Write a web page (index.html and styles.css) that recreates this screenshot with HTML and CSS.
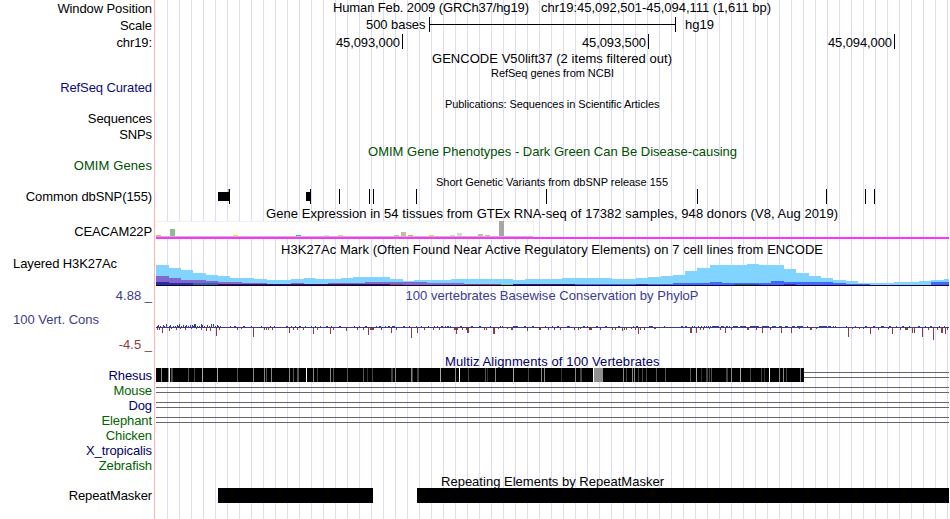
FILE: index.html
```html
<!DOCTYPE html>
<html lang="en">
<head>
    <meta charset="UTF-8"/>
    <title>chr19:45,092,501-45,094,111</title>
    <link rel="stylesheet" href="styles.css">
</head>
<body>

<div class="browser">
    <div class="row position">
        <div class="labels"><span>Window Position</span></div>
        <svg viewBox="156 0 793 17">
            <text x="333" y="12" textLength="196">Human Feb. 2009 (GRCh37/hg19)</text>
            <text x="541" y="12" textLength="230">chr19:45,092,501-45,094,111 (1,611 bp)</text>
        </svg>
    </div>

    <div class="row position">
        <div class="labels"><span>Scale</span></div>
        <svg viewBox="156 17 793 17">
            <text x="366" y="29" textLength="59.5">500 bases</text>
            <path d="M429 17h1v7h245v-7h1v15h-1v-7h-245v7h-1z"/>
            <text x="685" y="29" textLength="29">hg19</text>
        </svg>
    </div>

    <div class="row ruler">
        <div class="labels"><span>chr19:</span></div>
        <svg viewBox="156 34 793 16">
            <text x="336" y="47" textLength="64">45,093,000</text>
            <text x="582" y="47" textLength="64">45,093,500</text>
            <text x="828" y="47" textLength="64">45,094,000</text>
            <path d="M402 34h1v15h-1zM648 34h1v15h-1zM894 34h1v15h-1z"/>
        </svg>
    </div>

    <div class="row gencode">
        <div class="labels"></div>
        <svg viewBox="156 50 793 16">
            <text x="432" y="63" textLength="240">GENCODE V50lift37 (2 items filtered out)</text>
        </svg>
    </div>

    <div class="row refseq">
        <div class="labels"><span>RefSeq Curated</span></div>
        <svg viewBox="156 66 793 31">
            <text class="small" x="491" y="77" textLength="123">RefSeq genes from NCBI</text>
        </svg>
    </div>

    <div class="row pubs">
        <div class="labels"><span>Sequences</span><span>SNPs</span></div>
        <svg viewBox="156 97 793 47">
            <text class="small" x="445" y="108" textLength="214.5">Publications: Sequences in Scientific Articles</text>
        </svg>
    </div>

    <div class="row omim">
        <div class="labels"><span>OMIM Genes</span></div>
        <svg viewBox="156 144 793 31">
            <text x="368" y="156" textLength="369">OMIM Gene Phenotypes - Dark Green Can Be Disease-causing</text>
        </svg>
    </div>

    <div class="row dbsnp">
        <div class="labels"><span>Common dbSNP(155)</span></div>
        <svg viewBox="156 175 793 31">
            <text class="small" x="436" y="186" textLength="232">Short Genetic Variants from dbSNP release 155</text>
            <path class="shade" d="M228 189h1v3h-1z"/>
            <path d="M218 192h11v9h-11zM306 192h4v9h-4z"/>
            <g id="snps"></g>
        </svg>
    </div>

    <div class="row gtex">
        <div class="labels"><span>CEACAM22P</span></div>
        <svg viewBox="156 206 793 36">
            <text x="266" y="218" textLength="572">Gene Expression in 54 tissues from GTEx RNA-seq of 17382 samples, 948 donors (V8, Aug 2019)</text>
            <path class="frame" d="M156 221h378v16h-378z"/>
            <path class="plot" d="M156 222h377v14h-377z"/>
            <path class="axis" d="M156 236h377v1h-377z"/>
            <g id="tissues"></g>
            <path class="gene" d="M156 237h793v2h-793z"/>
        </svg>
    </div>

    <div class="row h3k27ac">
        <div class="labels left"><span>Layered H3K27Ac</span></div>
        <svg viewBox="156 242 793 46">
            <text x="281" y="254" textLength="542">H3K27Ac Mark (Often Found Near Active Regulatory Elements) on 7 cell lines from ENCODE</text>
            <g id="signal"></g>
            <path class="base" d="M156 285h793v1h-793z"/>
        </svg>
    </div>

    <div class="row cons">
        <div class="labels">
            <span class="max">4.88 _</span>
            <span class="name">100 Vert. Cons</span>
            <span class="min">-4.5 _</span>
        </div>
        <svg viewBox="156 288 793 66">
            <text x="405.5" y="300" textLength="293">100 vertebrates Basewise Conservation by PhyloP</text>
            <path class="up" d="M156 327h793v1h-793z"/>
            <g id="phylop"></g>
        </svg>
    </div>

    <div class="row multiz">
        <div class="labels">
            <span>Rhesus</span>
            <span class="green">Mouse</span>
            <span>Dog</span>
            <span class="green">Elephant</span>
            <span class="green">Chicken</span>
            <span>X_tropicalis</span>
            <span class="green">Zebrafish</span>
        </div>
        <svg viewBox="156 354 793 119">
            <text x="445" y="366" textLength="214.5">Multiz Alignments of 100 Vertebrates</text>
            <path d="M156 368h648v14h-648z"/>
            <g id="rhesus"></g>
            <path class="gap" d="M804 372.5h145M804 377.5h145M156 387.5h793M156 392.5h793M156 402.5h793M156 407.5h793M156 417.5h793M156 422.5h793"/>
        </svg>
    </div>

    <div class="row rmsk">
        <div class="labels"><span>RepeatMasker</span></div>
        <svg viewBox="156 473 793 46">
            <text x="441" y="486" textLength="223">Repeating Elements by RepeatMasker</text>
            <path d="M218 488h155v15h-155zM417 488h532v15h-532z"/>
        </svg>
    </div>
</div>

<script src="tracks.js"></script>
</body>
</html>
```
FILE: styles.css
```css
body {
    margin: 0;
    background: white;
    font-family: 'Liberation Sans', Helvetica, Arial, sans-serif;
    font-size: 13px;
    line-height: 15px;
    overflow: hidden;
}

.browser {
    width: 949px;
    height: 519px;
    background-image: linear-gradient(#ffb4b4, #ffb4b4), repeating-linear-gradient(to right, transparent 0 11px, #dcdcf8 11px 12px);
    background-size: 1px 100%, 793px 100%;
    background-position: 154px 0, 156px 0;
    background-repeat: no-repeat;
}

.row {
    display: grid;
    grid-template-columns: 152px 793px;
    column-gap: 4px;
}

.labels {
    display: flex;
    flex-direction: column;
    align-items: flex-end;
    padding-top: 14px;
    box-sizing: border-box;
    white-space: nowrap;
    letter-spacing: -0.1px;
}

svg {
    display: block;
    width: 793px;
    height: 100%;
    overflow: visible;
    shape-rendering: crispEdges;
}

.small {
    font-size: 11px;
}

.position {
    height: 17px;
}

.ruler, .gencode {
    height: 16px;
}

.position .labels, .ruler .labels {
    padding-top: 1px;
}

.refseq, .omim, .dbsnp {
    height: 31px;
}

.refseq .labels {
    color: #0c0c78;
}

.pubs {
    height: 47px;
}

.pubs .labels {
    row-gap: 1px;
}

.omim {
    color: #005000;
    fill: #005000;
}

.omim .labels {
    letter-spacing: 0.1px;
}

.shade {
    fill: #999;
}

.gtex {
    height: 36px;
}

.gtex .labels {
    padding-top: 18px;
}

.frame {
    fill: #f0f0f0;
}

.plot {
    fill: white;
}

.axis {
    fill: #bebebe;
}

.gene {
    fill: #ff33ff;
}

.h3k27ac {
    height: 46px;
}

.labels.left {
    align-items: flex-start;
    padding-left: 13px;
}

.base {
    fill: #100030;
}

.cons {
    height: 66px;
    color: #3c3c8c;
    fill: #3c3c8c;
}

.cons .labels {
    padding-top: 0;
    row-gap: 10px;
    letter-spacing: 0;
}

.cons .max {
    margin-bottom: -1px;
}

.cons .name {
    align-self: flex-start;
    padding-left: 13px;
}

.cons .min {
    color: #8c3c3c;
}

.up {
    fill: #3c3c8c;
}

.down {
    fill: #8c3c3c;
}

.multiz {
    height: 119px;
    color: #000064;
}

.multiz text {
    fill: #000064;
}

.green {
    color: #006400;
}

.gap {
    fill: none;
    stroke: #666;
}

.rmsk {
    height: 46px;
}

.rmsk .labels {
    padding-top: 15px;
}
```
FILE: tracks.js
```js
const SVG = "http://www.w3.org/2000/svg";

function addRect(id, x, y, w, h, fill, cls) {
    const rect = document.createElementNS(SVG, "rect");
    rect.setAttribute("x", x);
    rect.setAttribute("y", y);
    rect.setAttribute("width", w);
    rect.setAttribute("height", h);
    if (fill) rect.setAttribute("fill", fill);
    if (cls) rect.setAttribute("class", cls);
    document.getElementById(id).appendChild(rect);
}

const snps = [229, 310, 339, 369, 373, 416, 546, 697, 826, 865, 874];
snps.forEach(x => addRect("snps", x, 189, 1, 15));

// x, height, colour
const tissues = [
    [156, 1, "#ffa54f"], [170, 7, "#8fbc8f"], [233, 1, "#eeee00"], [296, 1, "#00cdcd"],
    [324, 1, "#eed5d2"], [338, 1, "#eec591"], [394, 1, "#cdb79e"], [401, 4, "#cdb79e"],
    [408, 1, "#9acd32"], [429, 1, "#ffd700"], [450, 1, "#b4eeb4"], [457, 3, "#d9d9d9"],
    [478, 2, "#cdb79e"], [485, 1, "#cdb79e"], [499, 15, "#a6a6a6"]
];
tissues.forEach(([x, h, fill]) => addRect("tissues", x, 236 - h, 5, h, fill));

// each layer: start x, top y; a step lasts until the next start
const layers = [
    ["#80d4ff", [[156, 265], [169, 268], [181, 270], [193, 273], [206, 275], [218, 276], [230, 278],
        [254, 279], [267, 280], [291, 279], [304, 278], [316, 279], [341, 278], [353, 277], [390, 279],
        [403, 281], [414, 280], [451, 279], [513, 280], [525, 279], [562, 278], [612, 279], [636, 278],
        [648, 277], [661, 276], [673, 275], [685, 271], [697, 268], [710, 265], [747, 264], [759, 265],
        [784, 269], [796, 273], [809, 276], [821, 278], [833, 280], [846, 281], [858, 283], [894, 282],
        [919, 281], [931, 280], [944, 279], [949, 285]]],
    ["#8068d0", [[156, 276], [169, 278], [181, 280], [206, 281], [218, 282], [242, 283], [267, 284],
        [291, 283], [304, 284], [328, 283], [365, 282], [427, 283], [464, 284], [480, 285]]],
    ["#2c2ca0", [[156, 282], [169, 283], [193, 284], [365, 285]]],
    ["#38609c", [[193, 283], [218, 284], [230, 285]]],
    ["#301060", [[218, 284], [390, 285]]],
    ["#804870", [[390, 284], [403, 285], [464, 284], [501, 285]]],
    ["#80c080", [[501, 284], [513, 285]]],
    ["#28207c", [[513, 284], [575, 285]]],
    ["#4068ff", [[575, 284], [673, 283], [710, 282], [722, 283], [771, 281], [784, 282], [833, 283],
        [846, 284], [870, 285], [931, 282], [949, 285]]],
    ["#305878", [[734, 284], [759, 285]]],
    ["#4028b0", [[636, 284], [648, 285], [784, 284], [796, 285]]]
];
layers.forEach(([fill, steps]) => {
    for (let i = 0; i < steps.length - 1; i++) {
        const [x, y] = steps[i];
        addRect("signal", x, y, steps[i + 1][0] - x, 285 - y, fill);
    }
});

// x, height, width (1 if absent)
const conserved = [
    [157, 1], [158, 2], [160, 1], [163, 2], [164, 1], [166, 3], [169, 1], [170, 2], [173, 1], [175, 1],
    [177, 2], [178, 1], [179, 3], [181, 1], [183, 2], [185, 1], [186, 2], [188, 1], [190, 2], [192, 2],
    [193, 1], [194, 3], [195, 3], [197, 1], [199, 1], [201, 3], [202, 2], [204, 1], [207, 2], [209, 1],
    [211, 3], [213, 3], [215, 1], [217, 2], [218, 1], [220, 1], [230, 1], [234, 1, 2], [243, 1, 2], [251, 1],
    [261, 1], [270, 1], [274, 1], [286, 1, 2], [291, 1], [295, 1], [299, 1, 2], [305, 1], [311, 1], [315, 1],
    [320, 1], [326, 1, 2], [331, 1], [339, 1, 2], [354, 1], [359, 1], [365, 1, 2], [376, 1], [379, 1, 2],
    [385, 1], [388, 1, 2], [392, 1, 3], [403, 1, 2], [409, 1], [416, 1], [421, 1], [428, 1], [434, 1],
    [437, 1], [441, 1, 2], [445, 1], [447, 1, 2], [450, 1], [460, 1, 2], [471, 1, 2], [479, 1, 2], [490, 1],
    [500, 1], [502, 1], [513, 1, 5], [524, 1, 2], [532, 1, 2], [545, 1], [552, 1], [557, 1, 2], [567, 1, 3],
    [583, 1, 2], [587, 1], [596, 1, 2], [605, 1, 2], [618, 1, 2], [633, 1], [636, 1, 2], [649, 1, 4],
    [664, 1], [681, 1, 2], [685, 1, 2], [692, 1], [694, 1], [698, 1], [701, 1], [704, 1], [706, 1], [708, 1],
    [710, 1], [712, 1, 7], [721, 1, 3], [726, 1, 2], [729, 1], [733, 1, 5], [740, 1, 6], [750, 1, 9],
    [762, 1, 7], [772, 1, 4], [779, 1, 3], [785, 1, 3], [792, 1, 3], [797, 1, 6], [807, 1], [819, 1, 8],
    [828, 1, 3], [833, 1], [835, 1], [846, 1], [855, 1], [865, 1, 2], [873, 1, 2], [881, 1, 3], [889, 1, 2],
    [896, 1], [902, 1, 2], [909, 1], [918, 1, 2], [925, 1], [930, 1, 2], [939, 1], [944, 1]
];
conserved.forEach(([x, h, w = 1]) => addRect("phylop", x, 327 - h, w, h, null, "up"));

const accelerated = [
    [157, 2], [159, 2], [162, 5], [169, 3], [171, 1], [176, 2], [180, 1], [185, 2], [191, 1], [196, 1],
    [201, 2], [206, 3], [210, 3], [216, 8], [219, 2], [237, 2], [241, 1], [253, 9], [264, 2], [266, 2],
    [268, 2], [272, 2], [289, 5], [293, 2], [297, 2], [303, 2], [313, 6], [317, 2], [330, 6], [333, 2],
    [346, 3], [357, 2], [363, 2], [368, 7], [370, 2, 4], [381, 2], [391, 5], [396, 2], [411, 10], [417, 5],
    [424, 2], [433, 2], [439, 2], [454, 2, 4], [456, 6], [462, 2], [466, 2], [467, 5, 2], [484, 2], [486, 2],
    [493, 6, 2], [498, 1], [507, 1], [511, 2, 2], [527, 3], [539, 2, 2], [548, 2], [554, 2], [560, 2],
    [574, 2], [578, 2], [580, 1], [589, 2, 3], [600, 2], [612, 2], [615, 2], [622, 3], [624, 2], [626, 2],
    [631, 1], [635, 2], [638, 6], [640, 2], [644, 2], [654, 1, 2], [690, 5, 2], [696, 5], [700, 2], [703, 2],
    [709, 1], [720, 2], [725, 5], [731, 2], [747, 2, 2], [756, 2], [762, 5], [770, 2], [781, 5], [791, 5],
    [799, 1], [810, 2, 2], [816, 1], [848, 9], [852, 1], [859, 1], [863, 1], [870, 6], [878, 2], [888, 1],
    [892, 6], [900, 2], [905, 2, 3], [912, 5], [914, 5], [922, 9], [928, 2], [933, 12], [937, 2], [941, 5, 2],
    [945, 6], [947, 2]
];
accelerated.forEach(([x, h, w = 1]) => addRect("phylop", x, 328, w, h, null, "down"));

// mismatches in the Rhesus alignment: grey level -> positions
const mismatches = {
    "#333": [367, 487, 561, 701, 764],
    "#444": [172, 194, 317, 372, 391, 392, 412, 417, 418, 468, 528, 580, 581, 626, 638, 642, 646, 706, 707, 709, 726, 727, 750, 761, 786],
    "#555": [171, 188, 237, 266, 293, 297, 298, 333, 347, 363, 485, 656, 665, 690, 711],
    "#888": [161, 168, 253, 264, 271, 289, 313, 330, 395, 411, 455, 495, 541, 544, 575, 623, 632, 634, 731, 779, 783, 800],
    "#aaa": [202, 217, 440, 513, 696, 740],
    "#fff": [169, 306, 459, 593, 769]
};
for (const [fill, positions] of Object.entries(mismatches)) {
    positions.forEach(x => addRect("rhesus", x, 368, 1, 14, fill));
}
addRect("rhesus", 594, 368, 9, 14, "#909090");
```
